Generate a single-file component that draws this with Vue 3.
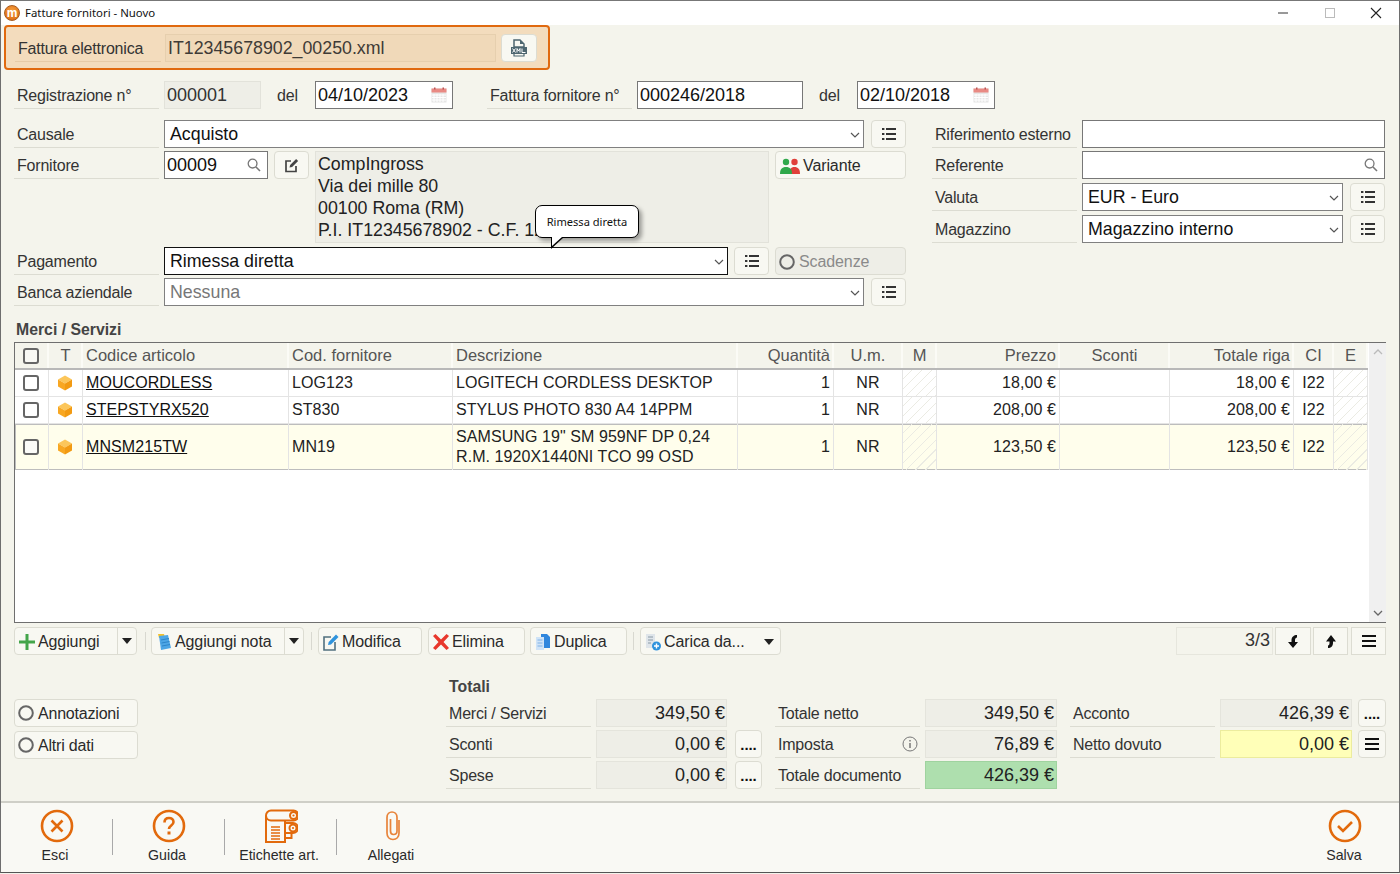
<script setup>
const headers = [
  { t: '', c: 'cb' }, { t: 'T', c: 'ctr' }, { t: 'Codice articolo' }, { t: 'Cod. fornitore' }, { t: 'Descrizione' },
  { t: 'Quantità', c: 'rgt' }, { t: 'U.m.', c: 'ctr' }, { t: 'M', c: 'ctr' }, { t: 'Prezzo', c: 'rgt' },
  { t: 'Sconti', c: 'ctr' }, { t: 'Totale riga', c: 'rgt' }, { t: 'CI', c: 'ctr' }, { t: 'E', c: 'ctr' }
]
const rows = [
  { code: 'MOUCORDLESS', forn: 'LOG123', desc: ['LOGITECH CORDLESS DESKTOP'], price: '18,00 €' },
  { code: 'STEPSTYRX520', forn: 'ST830', desc: ['STYLUS PHOTO 830 A4 14PPM'], price: '208,00 €' },
  { code: 'MNSM215TW', forn: 'MN19', desc: ['SAMSUNG 19" SM 959NF DP 0,24', 'R.M. 1920X1440NI TCO 99 OSD'], price: '123,50 €', sel: true }
]
</script>

<template>
  <div class="window">
    <svg class="sprite" xmlns="http://www.w3.org/2000/svg">
      <symbol id="i-list" viewBox="0 0 16 16">
        <g fill="#333"><rect x="1" y="2" width="2.4" height="2"/><rect x="1" y="7" width="2.4" height="2"/><rect x="1" y="12" width="2.4" height="2"/><rect x="5" y="2" width="10" height="2"/><rect x="5" y="7" width="10" height="2"/><rect x="5" y="12" width="10" height="2"/></g>
      </symbol>
      <symbol id="i-chev" viewBox="0 0 10 6"><path d="M1 1l4 4 4-4" fill="none" stroke="#555" stroke-width="1.2"/></symbol>
      <symbol id="i-mag" viewBox="0 0 14 14"><circle cx="5.6" cy="5.6" r="4.4" fill="none" stroke="#777" stroke-width="1.3"/><path d="M9 9l4 4" stroke="#777" stroke-width="1.6"/></symbol>
      <symbol id="i-cal" viewBox="0 0 16 16">
        <rect x="0.5" y="1.5" width="15" height="14" fill="#e6e6e6"/><rect x="0.5" y="1.5" width="15" height="4" fill="#e98a84"/>
        <path d="M3 7v8M6 7v8M9 7v8M12 7v8M1 8h14M1 10.5h14M1 13h14" stroke="#fff" stroke-width="1"/>
        <rect x="3" y="0.5" width="1.5" height="2" fill="#b55"/><rect x="11.5" y="0.5" width="1.5" height="2" fill="#b55"/>
      </symbol>
      <symbol id="i-hamb" viewBox="0 0 14 12"><path d="M0 1h14M0 6h14M0 11h14" stroke="#111" stroke-width="2"/></symbol>
      <symbol id="i-cube" viewBox="0 0 16 16">
        <path d="M8 0.5l7 4-7 4-7-4z" fill="#fcc65a"/><path d="M1 4.5l7 4v7l-7-4z" fill="#f8a722"/><path d="M15 4.5l-7 4v7l7-4z" fill="#f29a12"/>
      </symbol>
      <symbol id="i-radio" viewBox="0 0 16 16"><circle cx="8" cy="8" r="6.8" fill="none" stroke="#666" stroke-width="2"/></symbol>
      <symbol id="i-caret" viewBox="0 0 10 6"><path d="M0 0h10L5 6z" fill="#222"/></symbol>
    </svg>

    <header class="titlebar">
      <span class="logo">m</span>
      <span class="wintitle">Fatture fornitori - Nuovo</span>
      <span class="winctl">
        <svg width="46" height="14" viewBox="0 0 46 14"><path d="M17 7h10" stroke="#333"/></svg>
        <svg width="46" height="14" viewBox="0 0 46 14"><rect x="18.500" y="2.500" width="9" height="9" fill="none" stroke="#bbb"/></svg>
        <svg width="46" height="14" viewBox="0 0 46 14"><path d="M18 2l10 10M28 2L18 12" stroke="#222" stroke-width="1.1"/></svg>
      </span>
    </header>

    <main class="content">
      <section class="febox">
        <div class="lbl fe-lbl">Fattura elettronica</div>
        <div class="fe-file">IT12345678902_00250.xml</div>
        <button class="btn fe-btn">
          <svg width="18" height="18" viewBox="0 0 18 18">
            <path d="M4 1h6l4 4v3H4z" fill="none" stroke="#4d6670" stroke-width="1.5"/><path d="M10 1l4 4h-4z" fill="#4d6670"/>
            <rect x="1" y="8" width="16" height="7" fill="#4d6670"/>
            <path d="M2.500 9.500l3 4M5.500 9.500l-3 4M7 13.500v-4l1.500 2.500 1.500-2.500v4M12 9.500v4h3.500" stroke="#fff" stroke-width="1" fill="none"/>
            <path d="M4 15v2h10v-2" fill="none" stroke="#4d6670" stroke-width="1.2"/>
          </svg>
        </button>
      </section>

      <section class="row reg-row">
        <div class="lbl">Registrazione n°</div>
        <div class="fld ro w97">000001</div>
        <span class="del del-1">del</span>
        <div class="fld inp w138">04/10/2023<svg class="cal" width="16" height="16"><use href="#i-cal"/></svg></div>
        <div class="lbl lbl-ff">Fattura fornitore n°</div>
        <div class="fld inp w166">000246/2018</div>
        <span class="del del-2">del</span>
        <div class="fld inp w138">02/10/2018<svg class="cal" width="16" height="16"><use href="#i-cal"/></svg></div>
      </section>

      <section class="upper">
        <div class="leftcol">
          <div class="row">
            <div class="lbl">Causale</div>
            <div class="fld sel w700">Acquisto<svg class="chev" width="10" height="6"><use href="#i-chev"/></svg></div>
            <button class="btn listbtn"><svg width="16" height="16"><use href="#i-list"/></svg></button>
          </div>
          <div class="fornblock">
            <div class="lbl">Fornitore</div>
            <div class="fld inp w104">00009<svg class="mag" width="14" height="14"><use href="#i-mag"/></svg></div>
            <button class="btn editbtn">
              <svg width="15" height="15" viewBox="0 0 15 15"><path d="M7 3H2v10.500h10V8" fill="none" stroke="#444" stroke-width="1.7"/><path d="M5.500 9.500l.6-2.500 6-6 2 2-6 6z" fill="#444"/></svg>
            </button>
            <div class="addr">
              <div>CompIngross</div><div>Via dei mille 80</div><div>00100 Roma (RM)</div><div class="nowrap">P.I. IT12345678902 - C.F. 12345678902</div>
            </div>
            <button class="btn varbtn">
              <svg width="21" height="16" viewBox="0 0 21 16"><circle cx="14.500" cy="4" r="3.200" fill="#e0403a"/><path d="M9 16c0-5 2-7 5.500-7s5.500 2 5.500 7z" fill="#e0403a"/><circle cx="6" cy="4" r="3.200" fill="#2fa84a"/><path d="M0 16c0-5 2-7 6-7s6 2 6 7z" fill="#2fa84a"/></svg>
              Variante
            </button>
          </div>
          <div class="row pag-row">
            <div class="lbl">Pagamento</div>
            <div class="fld sel focus w564">Rimessa diretta<svg class="chev" width="10" height="6"><use href="#i-chev"/></svg></div>
            <button class="btn listbtn lb1"><svg width="16" height="16"><use href="#i-list"/></svg></button>
            <button class="btn scad"><svg width="16" height="16"><use href="#i-radio"/></svg>Scadenze</button>
          </div>
          <div class="row">
            <div class="lbl">Banca aziendale</div>
            <div class="fld sel dim w700">Nessuna<svg class="chev" width="10" height="6"><use href="#i-chev"/></svg></div>
            <button class="btn listbtn"><svg width="16" height="16"><use href="#i-list"/></svg></button>
          </div>
          <div class="tooltip">Rimessa diretta<span class="tail"></span></div>
        </div>

        <div class="rightcol">
          <div class="row"><div class="lbl">Riferimento esterno</div><div class="fld inp w303"></div></div>
          <div class="row"><div class="lbl">Referente</div><div class="fld inp w303"><svg class="mag" width="14" height="14"><use href="#i-mag"/></svg></div></div>
          <div class="row r4"><div class="lbl">Valuta</div><div class="fld sel w261">EUR - Euro<svg class="chev" width="10" height="6"><use href="#i-chev"/></svg></div><button class="btn listbtn"><svg width="16" height="16"><use href="#i-list"/></svg></button></div>
          <div class="row r4"><div class="lbl">Magazzino</div><div class="fld sel w261">Magazzino interno<svg class="chev" width="10" height="6"><use href="#i-chev"/></svg></div><button class="btn listbtn"><svg width="16" height="16"><use href="#i-list"/></svg></button></div>
        </div>
      </section>

      <h2 class="sect">Merci / Servizi</h2>

      <section class="table">
        <div class="tbody">
          <div class="tr thead">
            <div v-for="h in headers" :key="h.t" class="td" :class="h.c">
              <span v-if="h.c === 'cb'" class="check"></span>{{ h.t }}
            </div>
          </div>
          <div v-for="r in rows" :key="r.code" class="tr item" :class="{ selrow: r.sel }">
            <div class="td cb"><span class="check"></span></div>
            <div class="td ctr cube"><svg width="16" height="16"><use href="#i-cube"/></svg></div>
            <div class="td"><a class="link">{{ r.code }}</a></div>
            <div class="td">{{ r.forn }}</div>
            <div class="td desc"><div v-for="d in r.desc" :key="d">{{ d }}</div></div>
            <div class="td rgt">1</div>
            <div class="td ctr">NR</div>
            <div class="td hatch"></div>
            <div class="td rgt">{{ r.price }}</div>
            <div class="td"></div>
            <div class="td rgt">{{ r.price }}</div>
            <div class="td ctr">I22</div>
            <div class="td hatch"></div>
          </div>
        </div>
        <div class="scrollbar">
          <svg width="10" height="6" viewBox="0 0 10 6"><path d="M1 5l4-4 4 4" fill="none" stroke="#bbb" stroke-width="1.300"/></svg>
          <svg width="10" height="6" viewBox="0 0 10 6"><path d="M1 1l4 4 4-4" fill="none" stroke="#666" stroke-width="1.300"/></svg>
        </div>
      </section>

      <section class="toolbar">
        <div class="split w123">
          <button class="btn tb grow">
            <svg width="18" height="18" viewBox="0 0 18 18"><path d="M7.500 1h3v6.500H17v3h-6.500V17h-3v-6.500H1v-3h6.500z" fill="#43a54a"/></svg>Aggiungi
          </button>
          <button class="caretbtn"><svg width="10" height="6"><use href="#i-caret"/></svg></button>
        </div>
        <span class="tsep"></span>
        <div class="split w153">
          <button class="btn tb grow">
            <svg width="18" height="18" viewBox="0 0 18 18"><path d="M3 1h6l1 4H4z" fill="#f2c12e"/><path d="M4 3l9-1 3 13-10 2z" fill="#4da6e6"/><path d="M6 7l8-1.500M6.500 10l8-1.500M7 13l8-1.500" stroke="#2d85c9"/></svg>Aggiungi nota
          </button>
          <button class="caretbtn"><svg width="10" height="6"><use href="#i-caret"/></svg></button>
        </div>
        <span class="tsep sep2"></span>
        <button class="btn tb w104b">
          <svg width="18" height="18" viewBox="0 0 18 18"><path d="M9 4H2v13h11V9" fill="none" stroke="#51707f" stroke-width="1.600"/><path d="M6 12l.7-3L14 1.500l2.500 2.500L9 11.500z" fill="#2f93dd"/></svg>Modifica
        </button>
        <button class="btn tb w97b">
          <svg width="18" height="18" viewBox="0 0 18 18"><path d="M1 3l2.500-2L9 6.500 14.500 1 17 3l-5.500 6 5.500 6-2.500 2L9 11.500 3.500 17 1 15l5.500-6z" fill="#e8372c"/></svg>Elimina
        </button>
        <button class="btn tb w97c">
          <svg width="18" height="18" viewBox="0 0 18 18"><path d="M7 1h6l3 3v11H7z" fill="#2f86dd"/><path d="M2 4h8v13H2z" fill="#cfe3f7"/><path d="M3.500 7h5M3.500 10h5M3.500 13h5" stroke="#7fb2e6"/></svg>Duplica
        </button>
        <span class="tsep sep3"></span>
        <button class="btn tb w141">
          <svg width="18" height="18" viewBox="0 0 18 18"><path d="M2 1h9v14H2z" fill="#dfe5ea"/><path d="M4 4h5M4 7h5M4 10h3" stroke="#8a9aa6"/><circle cx="12.500" cy="13" r="4.500" fill="#2f93dd"/><path d="M10 13h5M12.500 10.500v5" stroke="#fff" stroke-width="1.400"/></svg>
          <span class="grow-txt">Carica da...</span>
          <svg class="caret" width="10" height="6"><use href="#i-caret"/></svg>
        </button>
        <span class="spacer"></span>
        <div class="counter">3/3</div>
        <button class="sq sq-down">
          <svg width="12" height="13" viewBox="0 0 12 13"><path d="M10 0C7 0 4.500 2 4.500 5v2H1l5 6 5-6H8V5c0-1.500 1-2.500 2-2.500z" fill="#111"/></svg>
        </button>
        <button class="sq sq-up">
          <svg width="12" height="13" viewBox="0 0 12 13"><path d="M3 13c3 0 5-2 5-5V6.500h3L6 0 1 6.500h3.500V8c0 1.500-.5 2.500-1.500 2.500z" fill="#111"/></svg>
        </button>
        <button class="sq sq-menu"><svg width="14" height="12"><use href="#i-hamb"/></svg></button>
      </section>

      <section class="totals">
        <div class="totbtns">
          <button class="btn totbtn"><svg width="16" height="16"><use href="#i-radio"/></svg>Annotazioni</button>
          <button class="btn totbtn"><svg width="16" height="16"><use href="#i-radio"/></svg>Altri dati</button>
        </div>
        <div class="totcol c1">
          <div class="tot-title">Totali</div>
          <div class="row"><div class="lbl">Merci / Servizi</div><div class="val w131 p1">349,50 €</div></div>
          <div class="row"><div class="lbl">Sconti</div><div class="val w131 p1">0,00 €</div><button class="btn dots d1">....</button></div>
          <div class="row"><div class="lbl">Spese</div><div class="val w131 p1">0,00 €</div><button class="btn dots d1">....</button></div>
        </div>
        <div class="totcol c2">
          <div class="row"><div class="lbl">Totale netto</div><div class="val">349,50 €</div></div>
          <div class="row">
            <div class="lbl lbl-info">Imposta
              <svg width="16" height="16" viewBox="0 0 16 16"><circle cx="8" cy="8" r="7" fill="none" stroke="#777"/><path d="M8 7v5M8 4v1.600" stroke="#666" stroke-width="1.300"/></svg>
            </div>
            <div class="val">76,89 €</div>
          </div>
          <div class="row"><div class="lbl">Totale documento</div><div class="val green">426,39 €</div></div>
        </div>
        <div class="totcol c3">
          <div class="row"><div class="lbl">Acconto</div><div class="val">426,39 €</div><button class="btn dots d2">....</button></div>
          <div class="row"><div class="lbl">Netto dovuto</div><div class="val yellow">0,00 €</div><button class="btn dots d2"><svg width="14" height="12"><use href="#i-hamb"/></svg></button></div>
        </div>
      </section>
    </main>

    <footer class="footer">
      <button class="fitem">
        <svg width="34" height="34" viewBox="0 0 34 34"><circle cx="17" cy="17" r="15" fill="none" stroke="#e26a0c" stroke-width="2.600"/><path d="M11.500 11.500l11 11M22.500 11.500l-11 11" stroke="#e26a0c" stroke-width="2.600"/></svg>
        <span>Esci</span>
      </button>
      <i class="fsep"></i>
      <button class="fitem">
        <svg width="34" height="34" viewBox="0 0 34 34"><circle cx="17" cy="17" r="15" fill="none" stroke="#e26a0c" stroke-width="2.600"/><path d="M12.500 13.500c0-3 2-4.500 4.500-4.500s4.500 1.600 4.500 4c0 3.500-4.500 3.500-4.500 7" fill="none" stroke="#e26a0c" stroke-width="2.600"/><rect x="15.500" y="22.500" width="3" height="3" fill="#e26a0c"/></svg>
        <span>Guida</span>
      </button>
      <i class="fsep"></i>
      <button class="fitem">
        <svg width="34" height="34" viewBox="0 0 34 34" fill="none" stroke="#e26a0c" stroke-width="2">
          <path d="M7 1.500h22.500a5 5 0 0 1 0 10H7a5 5 0 0 1-5-5 5 5 0 0 1 5-5z"/><circle cx="29.500" cy="6.500" r="3.500" fill="#f9f9f4"/><circle cx="29.500" cy="6.500" r="1.100" fill="#e26a0c" stroke="none"/>
          <path d="M2 7v26h19V12"/><path d="M21 14h8a5 5 0 0 1 0 10h-8"/><circle cx="29" cy="19" r="3.500" fill="#f9f9f4"/><circle cx="29" cy="19" r="1.100" fill="#e26a0c" stroke="none"/>
          <path d="M21 29h6.500v-5"/>
          <path d="M7 18h9M7 21h9M7 24h9M7 27h9M7 30h9" stroke-width="1.300"/>
        </svg>
        <span>Etichette art.</span>
      </button>
      <i class="fsep"></i>
      <button class="fitem">
        <svg width="34" height="34" viewBox="0 0 34 34"><path d="M23 11v13c0 4-2.500 6.500-6 6.500s-6-2.500-6-6.500V8.500C11 5 13.500 3 16 3s5 2 5 5.500V22c0 2-1.500 3.500-3.500 3.500S14.500 24 14.500 22V10" fill="none" stroke="#e8843a" stroke-width="1.700"/></svg>
        <span>Allegati</span>
      </button>
      <span class="spacer"></span>
      <button class="fitem save">
        <svg width="34" height="34" viewBox="0 0 34 34"><circle cx="17" cy="17" r="15" fill="none" stroke="#e26a0c" stroke-width="2.600"/><path d="M10 17l5 5 9-9" fill="none" stroke="#e26a0c" stroke-width="2.600"/></svg>
        <span>Salva</span>
      </button>
    </footer>
  </div>
</template>

<style>
html, body { margin: 0; background: #f4f4ec; overflow: hidden; }
</style>

<style scoped>
* { box-sizing: border-box; }
.sprite { display: none; }
.window {
  width: 1400px; height: 873px; display: flex; flex-direction: column; overflow: hidden;
  background: #f4f4ec; border: 1px solid #6e6e6e; border-bottom-color: #555; border-top-color: #777;
  font: 16px "Liberation Sans", Arial, sans-serif; color: #2a2a2a;
}
.titlebar { height: 24px; flex: none; background: #fff; display: flex; align-items: center; padding-left: 3px; }
.logo {
  width: 16px; height: 16px; border-radius: 50%; background: radial-gradient(circle at 50% 35%, #f7a13d, #d9620f);
  color: #fff; font: bold 12px/14px "Liberation Sans", sans-serif; text-align: center; border: 1px solid #a85c1e;
}
.wintitle { margin: 0 0 2px 5px; font: 11.400px "Noto Sans", sans-serif; color: #111; }
.winctl { margin-left: auto; margin-right: 0; display: flex; }
.winctl svg { display: block; }
.content { flex: 1; padding-left: 13px; display: flex; flex-direction: column; min-height: 0; }

.febox {
  margin-left: -10px; width: 546px; height: 45px; flex: none; display: flex; align-items: center;
  background: #f3dcbd; border: 2px solid #e0690f; border-radius: 4px; padding: 0 0 0 9px;
}
.fe-lbl.lbl { width: 146px; border-color: #e6cba8; padding-left: 3px; }
.fe-file {
  margin-left: 4px; width: 331px; height: 28px; background: #f0d9b9; border: 1px solid #e6cfae;
  color: #3f3b36; font-size: 17.800px; line-height: 26px; padding-left: 2px;
}
.fe-btn { margin-left: 5px; width: 36px; background: #f5e1c6; border-color: #e6cfae; }

.row { display: flex; height: 28px; flex: none; gap: 5px; align-items: stretch; }
.row + .row { margin-top: 3px; }
.lbl {
  width: 145px; flex: none; height: 28px; padding-left: 3px; line-height: 29px; font-size: 16px; letter-spacing: -0.2px;
  border-bottom: 1px solid #dcdcd2; color: #333; white-space: nowrap;
}
.fld {
  position: relative; flex: none; height: 28px; padding-left: 2px; line-height: 26px; font-size: 18px;
  border: 1px solid #777; background: #fff; color: #111; white-space: nowrap;
}
.ro { background: #eeeee7; border-color: #e2e2da; color: #333; }
.sel { padding-left: 5px; border-color: #808080; font-size: 17.800px; }
.dim { color: #777; }
.focus { border-color: #111; }
.w97 { width: 97px; } .w138 { width: 138px; } .w166 { width: 166px; } .w700 { width: 700px; }
.w104 { width: 104px; } .w564 { width: 564px; } .w303 { width: 303px; } .w261 { width: 261px; }
.reg-row { margin-top: 11px; }
.del { line-height: 29px; color: #333; font-size: 16px; letter-spacing: -0.2px; }
.del-1 { margin-left: 11px; width: 33px; }
.del-2 { margin-left: 11px; width: 33px; }
.lbl-ff { margin-left: 29px; }
.cal { position: absolute; right: 5px; top: 5px; }
.chev { position: absolute; right: 3px; top: 11px; }
.mag { position: absolute; right: 6px; top: 6px; }

.btn {
  font: 16px "Liberation Sans", sans-serif; letter-spacing: -0.1px; color: #2a2a2a; background: #f8f8f2; border: 1px solid #dcdcd2;
  border-radius: 4px; height: 28px; padding: 0; display: flex; align-items: center; justify-content: center; flex: none;
}
.listbtn { width: 35px; margin-left: 2px; }
.lb1 { margin-left: 1px; }
.editbtn { width: 35px; margin-left: 1px; }

.upper { margin-top: 11px; display: flex; flex: none; position: relative; }
.leftcol { width: 893px; flex: none; position: relative; }
.rightcol { margin-left: 25px; width: 454px; }
.r4.row { margin-top: 4px; }
.fornblock { margin-top: 3px; height: 92px; display: flex; align-items: flex-start; gap: 5px; }
.addr {
  margin-left: 1px; width: 454px; height: 92px; background: #eeeee7; border: 1px solid #e2e2da; padding: 1px 0 0 2px;
  font-size: 17.800px; line-height: 22px; color: #222; overflow: hidden;
}
.nowrap { white-space: nowrap; }
.varbtn { width: 131px; margin-left: 1px; justify-content: flex-start; padding: 1px 0 0 4px; gap: 2px; }
.pag-row { margin-top: 4px; }
.scad { width: 131px; margin-left: 1px; background: #eeeee7; justify-content: flex-start; padding: 1px 0 0 3px; gap: 4px; color: #8a8a8a; }
.tooltip {
  position: absolute; left: 521px; top: 85px; width: 104px; height: 33px; background: #fff; border: 1px solid #000; border-radius: 7px;
  font: 11.100px/31px "Noto Sans", sans-serif; color: #111; text-align: center; box-shadow: 3px 3px 4px rgba(0,0,0,.35); z-index: 3;
}
.tail { position: absolute; left: 15px; top: 31px; width: 0; height: 0; }
.tail::before {
  content: ""; position: absolute; left: 0; top: 0; width: 13px; height: 12px; background: #000;
  clip-path: polygon(0 0, 100% 0, 0 100%);
}
.tail::after {
  content: ""; position: absolute; left: 1px; top: 0; width: 10px; height: 9px; background: #fff;
  clip-path: polygon(0 0, 100% 0, 0 100%);
}

.sect { margin: 13px 0 0; height: 23px; font: bold 15.800px/21px "Liberation Sans", sans-serif; color: #444; padding-left: 2px; }

.table { width: 1372px; height: 281px; flex: none; display: flex; background: #fff; border: 1px solid #6f6f6f; }
.tbody { width: 1353px; flex: none; }
.tr { display: grid; grid-template-columns: 34px 34px 206px 164px 285px 96px 69px 34px 123px 110px 124px 40px 34px; }
.thead { height: 27px; background: #f4f4ec; border-bottom: 2px solid #b8b8b8; color: #555; font-size: 16.500px; }
.thead .td { border-right: 2px solid #fbfbf6; padding: 0 2px 0 3px; }
.thead .td.cb { padding: 0 3px; }
.td {
  display: flex; align-items: center; padding: 0 3px; border-right: 1px solid #e4e4e4; white-space: nowrap; min-width: 0;
}
.ctr { justify-content: center; }
.rgt { justify-content: flex-end; }
.cb { justify-content: center; }
.item .cb { padding: 0 4px 0 2px; }
.item .cube { padding: 0 4px 0 2px; }
.item { height: 27px; border-bottom: 1px solid #e4e4e4; color: #222; letter-spacing: 0.08px; }
.item .desc { flex-direction: column; align-items: flex-start; justify-content: center; line-height: 20px; }
.selrow { height: 46px; background: #fffeec; border-bottom: 0; box-shadow: inset 0 0 0 1px #bdbdbd; }
.check { width: 16px; height: 16px; border: 2px solid #666; border-radius: 3px; background: #fff; display: block; }
.selrow .check { background: #fbfbf8; }
.thead .check { background: #f8f8f4; }
.link { color: #111; text-decoration: underline; }
.hatch { background: repeating-linear-gradient(135deg, transparent 0 6px, #ebebe3 6px 7px); }
.scrollbar {
  width: 17px; background: #f0f0f0; margin-left: 1px; display: flex; flex-direction: column; justify-content: space-between;
  align-items: center; padding: 6px 0; flex: none;
}
.scrollbar svg { display: block; }

.toolbar { margin-top: 4px; width: 1372px; height: 28px; flex: none; display: flex; align-items: stretch; }
.split { display: flex; height: 28px; border: 1px solid #dcdcd2; border-radius: 4px; background: #f8f8f2; overflow: hidden; flex: none; }
.w123 { width: 123px; } .w153 { width: 153px; }
.grow { flex: 1; border: 0; background: transparent; justify-content: flex-start; height: 26px; }
.tb { padding: 1px 0 0 3px; gap: 2px; justify-content: flex-start; }
.caretbtn { width: 19px; padding: 0; border: 0; border-left: 1px solid #dcdcd2; background: transparent; display: flex; align-items: center; justify-content: center; flex: none; }
.caretbtn svg { display: block; }
.tsep { width: 1px; height: 18px; margin: 5px 5px 0 8px; align-self: flex-start; background: #d8d8d0; flex: none; }
.sep2 { margin: 5px 6px 0 7px; }
.sep3 { margin: 5px 6px 0 6px; }
.w104b { width: 104px; }
.w97b { width: 97px; margin-left: 6px; }
.w97c { width: 97px; margin-left: 5px; }
.w141 { width: 141px; }
.grow-txt { flex: 1; text-align: left; }
.caret { margin-right: 6px; }
.spacer { flex: 1; }
.counter {
  width: 97px; height: 28px; border: 1px solid #e6e6dd; text-align: right; padding-right: 2px; line-height: 25px; color: #333; flex: none; font-size: 18px;
}
.sq {
  height: 28px; padding: 0; background: #f8f8f2; border: 1px solid #dcdcd2; display: flex; align-items: center; justify-content: center; flex: none;
}
.sq-down { width: 36px; margin-left: 2px; }
.sq-up { width: 35px; margin-left: 2px; }
.sq-menu { width: 35px; margin-left: 3px; }

.totals { margin-top: 21px; display: flex; align-items: flex-start; flex: none; }
.totbtns { width: 432px; padding-top: 23px; flex: none; }
.totbtn { width: 124px; justify-content: flex-start; padding: 2px 0 0 3px; gap: 4px; letter-spacing: -0.2px; }
.totbtn svg { margin-top: -2px; }
.totbtn + .totbtn { margin-top: 4px; }
.totcol { flex: none; }
.c1 { width: 329px; }
.tot-title { height: 23px; font: bold 15.800px/21px "Liberation Sans", sans-serif; color: #444; padding-left: 3px; }
.c2, .c3 { padding-top: 23px; }
.c2 { width: 295px; }
.val {
  width: 132px; height: 28px; flex: none; background: #eeeee7; border: 1px solid #e4e4dc; text-align: right;
  padding-right: 2px; line-height: 26px; font-size: 18px; color: #222;
}
.w131 { width: 131px; }
.p1 { padding-right: 1px; }
.green { background: #aedfae; border-color: #9fd39f; }
.yellow { background: #ffffb8; border-color: #ecec9e; }
.lbl-info { display: flex; align-items: center; justify-content: space-between; padding: 2px 2px 0 3px; }
.lbl-info svg { margin-top: -2px; }
.dots { font-weight: bold; font-size: 15px; line-height: 1; align-items: flex-end; padding-bottom: 5px; color: #111; }
.d1 { width: 27px; margin-left: 3px; }
.d2 { width: 28px; margin-left: 1px; }
.d2:has(svg) { align-items: center; padding-bottom: 0; }

.footer {
  height: 71px; flex: none; margin-top: auto; background: #f9f9f4; border-top: 2px solid #cfcfc7;
  display: flex; align-items: flex-start; padding-top: 6px;
}
.fitem {
  width: 112px; background: none; border: 0; padding: 0; display: flex; flex-direction: column; align-items: center;
  font: 14.200px "Liberation Sans", sans-serif; color: #2a2a2a; flex: none;
}
.fitem svg { display: block; margin-bottom: 2px; }
.fitem span { margin-left: -4px; line-height: 20px; }
.fsep { width: 1px; height: 36px; background: #a9a9a9; margin: 10px 0 0 -1px; flex: none; }
.save { width: 108px; }
.save span { margin-left: -2px; }
</style>
